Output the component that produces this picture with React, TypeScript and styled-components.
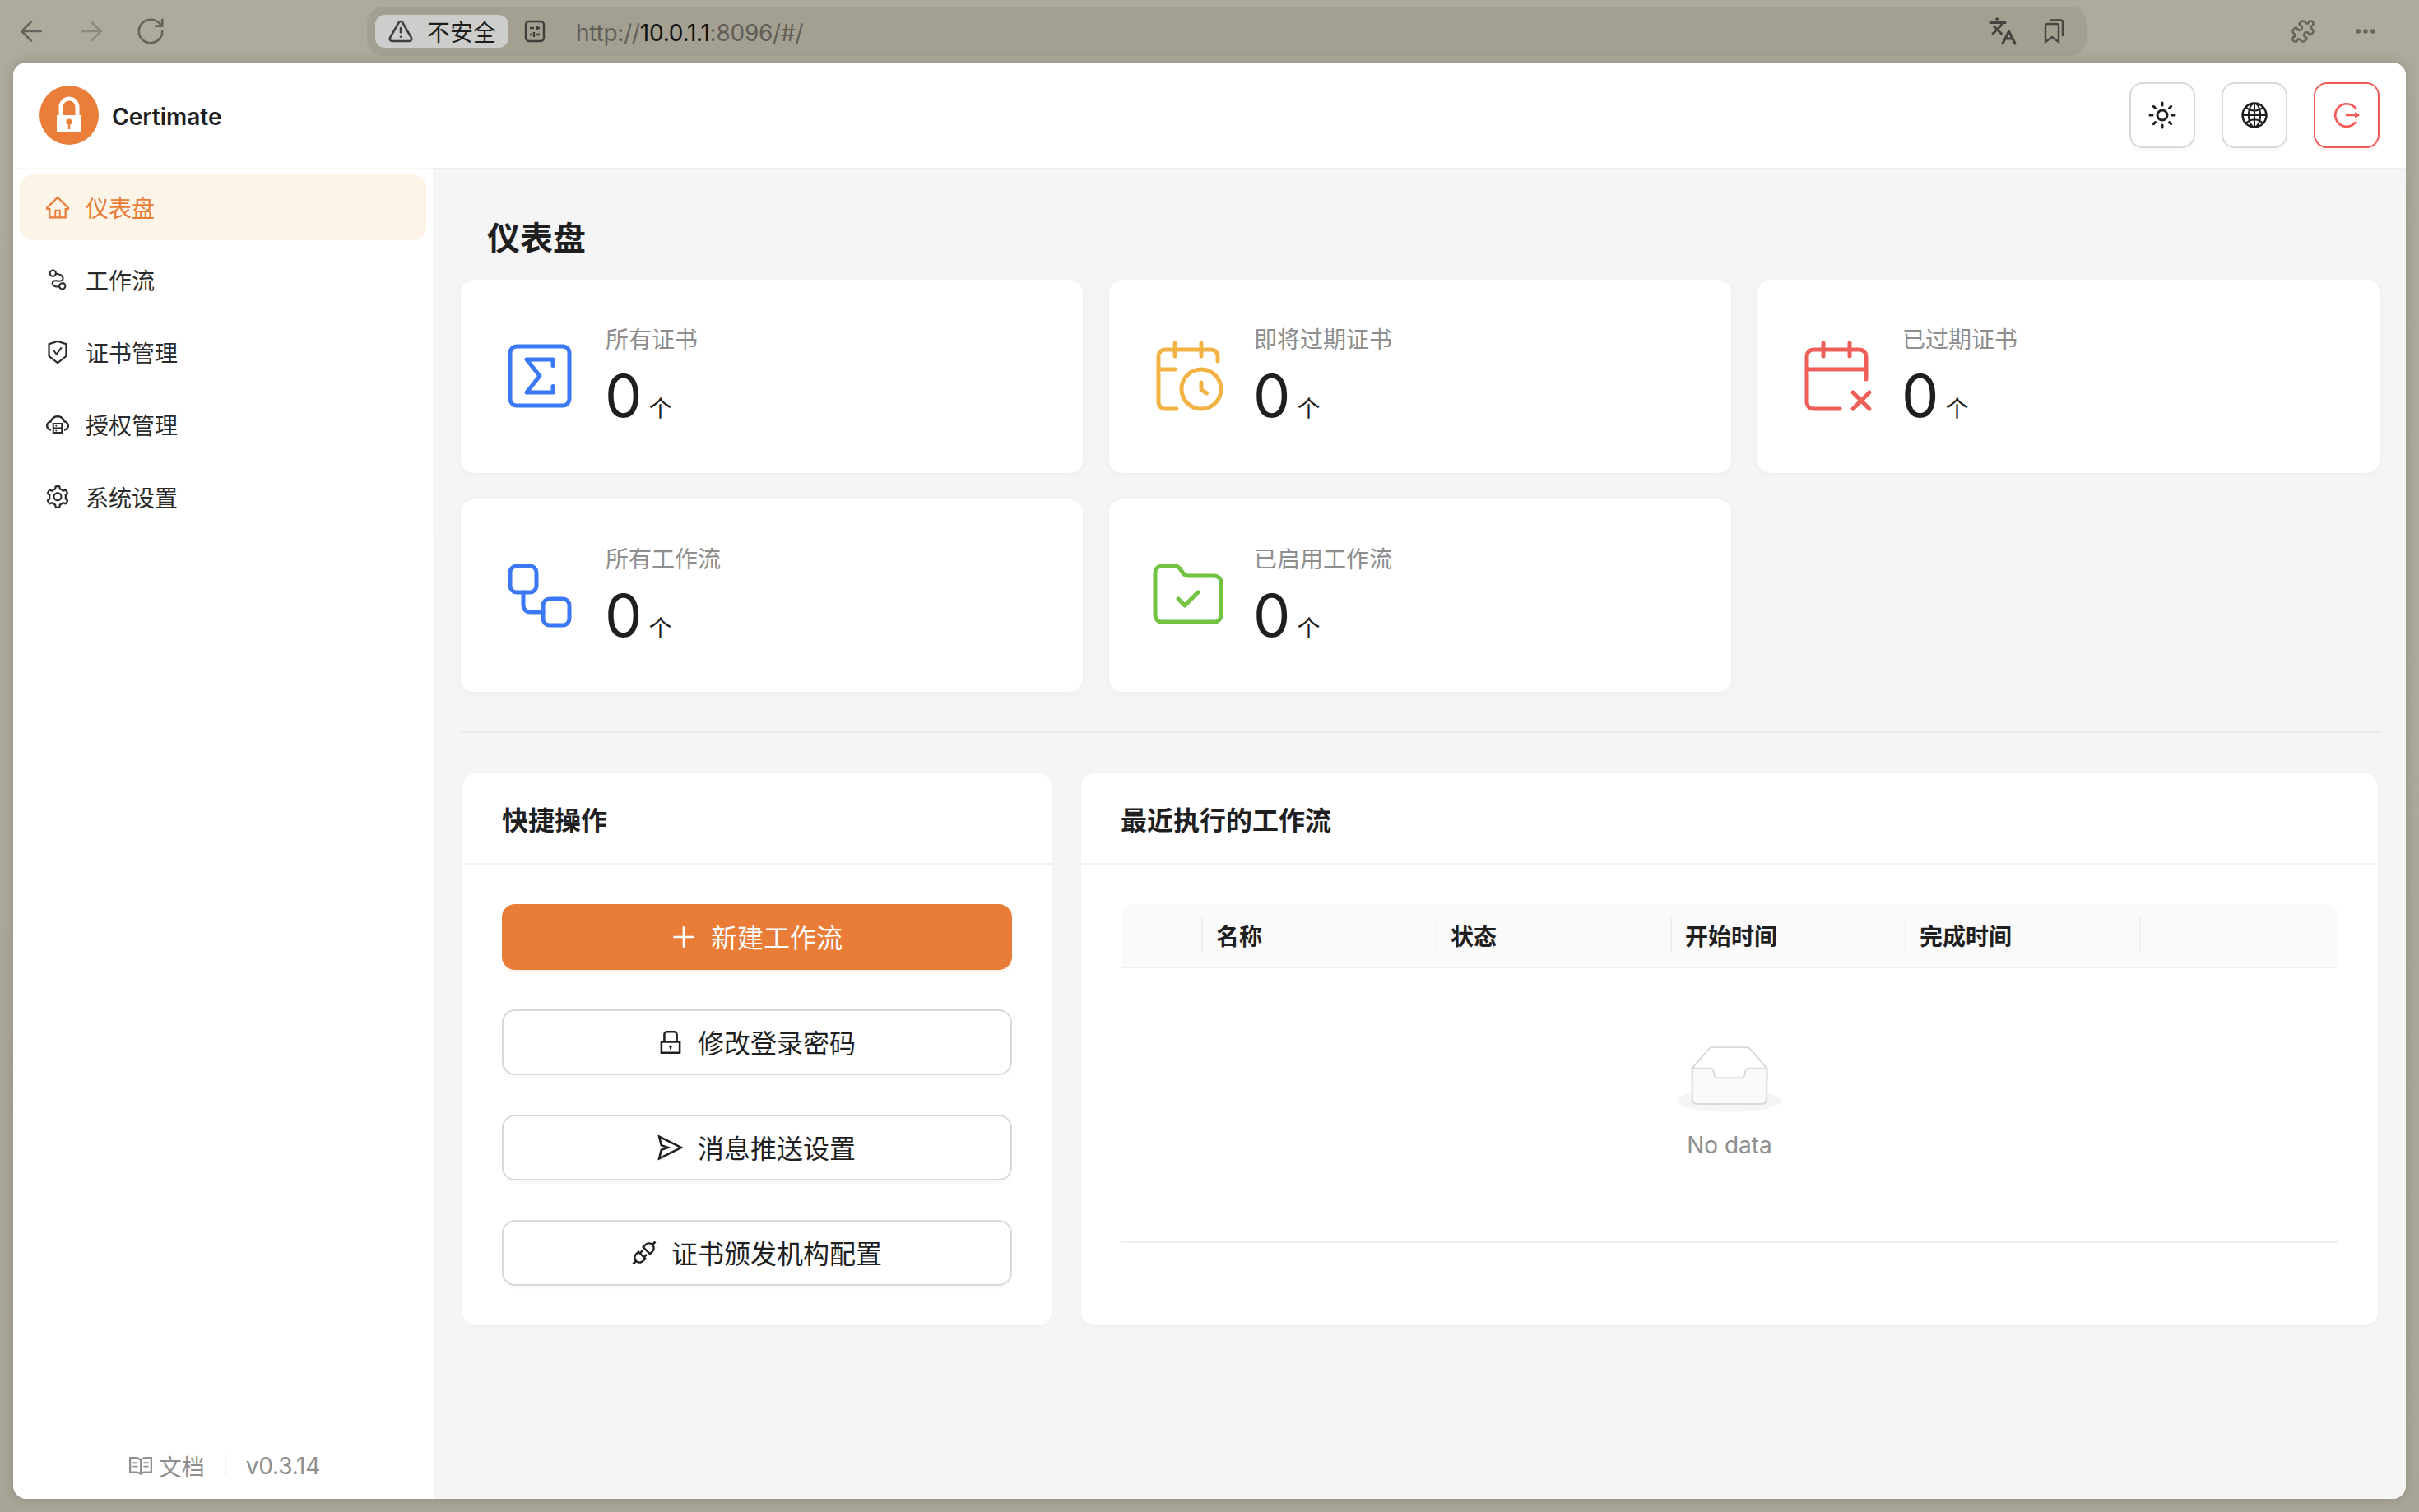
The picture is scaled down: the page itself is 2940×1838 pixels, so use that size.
import React from "react";
import styled, { createGlobalStyle } from "styled-components";
import {
  ArrowLeft,
  ArrowRight,
  CalendarClock,
  CalendarX2,
  Ellipsis,
  FolderCheck,
  Languages,
  Puzzle,
  RotateCw,
  SquareSigma,
  Sun,
  TriangleAlert,
  Workflow,
} from "lucide-react";
import {
  AiOutlineApi,
  AiOutlineCloudServer,
  AiOutlineGlobal,
  AiOutlineHome,
  AiOutlineLock,
  AiOutlineLogout,
  AiOutlineNodeIndex,
  AiOutlinePlus,
  AiOutlineRead,
  AiOutlineSafetyCertificate,
  AiOutlineSend,
  AiOutlineSetting,
} from "react-icons/ai";

const FONT = `"Inter", "Noto Sans CJK SC", "Noto Sans", sans-serif`;
const ORANGE = "#e97d38";
const TEXT = "#1f1f1f";
const MUTED = "#8e8e8e";

const Global = createGlobalStyle`
  html, body { margin: 0; padding: 0; }
  body { font-family: ${FONT}; color: ${TEXT}; background: #aca99a; }
  * { box-sizing: border-box; }
`;

const Page = styled.div`
  width: 2940px;
  height: 1838px;
  display: flex;
  flex-direction: column;
  background: linear-gradient(#aeab9c, #a9a697);
  overflow: hidden;
`;

/* Browser chrome */
const Chrome = styled.div`
  height: 76px;
  flex: none;
  display: flex;
  align-items: flex-start;
  padding: 8px 0 0 18px;
`;
const NavIcons = styled.div`
  width: 428px;
  height: 60px;
  display: flex;
  align-items: center;
  gap: 33px;
`;
const NavIcon = styled.span<{ $color: string }>`
  display: inline-flex;
  color: ${(p) => p.$color};
`;
const AddressBar = styled.div`
  width: 2090px;
  height: 60px;
  border-radius: 20px;
  background: #a3a092;
  display: flex;
  align-items: center;
  padding: 0 10px;
`;
const SecurityChip = styled.div`
  width: 162px;
  height: 40px;
  border-radius: 12px;
  background: #cdcdcb;
  display: flex;
  align-items: center;
  gap: 16px;
  padding-left: 15px;
  font-size: 28px;
  color: #1d1d1d;
`;
const TuneIcon = styled.svg`
  width: 28px;
  height: 28px;
  margin-left: 18px;
  color: #3f3e3a;
`;
const Url = styled.div`
  margin-left: 36px;
  padding-top: 3px;
  font-size: 28px;
  letter-spacing: -0.25px;
  color: #5f5e57;
  flex: 1;
`;
const UrlHost = styled.span`
  color: #111;
`;
const BarActions = styled.div`
  display: flex;
  align-items: center;
  gap: 30px;
  padding-right: 14px;
  color: #45443f;
`;
const ChromeEnd = styled.div`
  height: 60px;
  display: flex;
  align-items: center;
  gap: 46px;
  margin-left: 248px;
  color: #66655d;
`;

/* Window */
const Window = styled.div`
  flex: 1;
  margin: 0 16px 16px;
  border-radius: 16px;
  background: #fff;
  overflow: hidden;
  display: flex;
  flex-direction: column;
  box-shadow: 0 0 14px rgba(60, 55, 40, 0.22);
`;
const TopBar = styled.header`
  position: relative;
  z-index: 1;
  height: 128px;
  flex: none;
  display: flex;
  align-items: center;
  justify-content: space-between;
  padding: 0 32px;
  background: #fff;
  box-shadow: 0 1px 3px rgba(0, 0, 0, 0.05);
`;
const Brand = styled.div`
  display: flex;
  align-items: center;
  gap: 16px;
  font-size: 28px;
  font-weight: 600;
`;
const BrandName = styled.span`
  padding-top: 3px;
`;
const TopActions = styled.div`
  display: flex;
  gap: 32px;
`;
const IconButton = styled.button<{ $danger?: boolean }>`
  width: 80px;
  height: 80px;
  padding: 0;
  border-radius: 16px;
  background: #fff;
  display: flex;
  align-items: center;
  justify-content: center;
  border: 2px solid ${(p) => (p.$danger ? "#ef5a57" : "#d9d9d9")};
  color: ${(p) => (p.$danger ? "#ef5a57" : TEXT)};
  box-shadow: 0 4px 0 ${(p) => (p.$danger ? "rgba(255,38,5,0.06)" : "rgba(0,0,0,0.02)")};
`;
const Body = styled.div`
  flex: 1;
  min-height: 0;
  display: flex;
`;

/* Sidebar */
const Sidebar = styled.aside`
  width: 512px;
  flex: none;
  display: flex;
  flex-direction: column;
  justify-content: space-between;
`;
const Menu = styled.nav`
  height: 448px;
  padding: 8px 8px 0;
  border-right: 2px solid #f5f5f5;
  display: flex;
  flex-direction: column;
  gap: 8px;
`;
const MenuItem = styled.div<{ $active?: boolean }>`
  height: 80px;
  border-radius: 16px;
  display: flex;
  align-items: center;
  gap: 18px;
  padding-left: 30px;
  font-size: 28px;
  background: ${(p) => (p.$active ? "#fdf4e8" : "transparent")};
  color: ${(p) => (p.$active ? ORANGE : "#2a2a2a")};
`;
const SideFooter = styled.div`
  display: flex;
  align-items: center;
  justify-content: center;
  height: 44px;
  margin-bottom: 18px;
  font-size: 28px;
  color: ${MUTED};
`;
const DocLink = styled.span`
  display: inline-flex;
  align-items: center;
  gap: 6px;
`;
const FooterDivider = styled.span`
  width: 2px;
  height: 26px;
  background: #f0f0f0;
  margin: 0 24px;
`;
const Version = styled.span`
  letter-spacing: -0.2px;
`;

/* Main */
const Main = styled.main`
  flex: 1;
  min-width: 0;
  background: #f5f5f5;
  padding: 58px 32px 0;
`;
const Title = styled.h1`
  margin: 0 0 22px 32px;
  font-size: 40px;
  line-height: 56px;
  font-weight: 600;
`;
const StatGrid = styled.div`
  display: grid;
  grid-template-columns: repeat(3, 1fr);
  grid-auto-rows: 234.5px;
  gap: 32px;
`;
const StatCard = styled.div`
  background: #fff;
  border-radius: 16px;
  box-shadow: 0 2px 8px rgba(0, 0, 0, 0.04);
  display: flex;
  align-items: center;
  gap: 32px;
  padding: 0 48px;
`;
const StatIcon = styled.span<{ $color: string }>`
  display: inline-flex;
  color: ${(p) => p.$color};
`;
const StatText = styled.div`
  display: flex;
  flex-direction: column;
  padding-bottom: 2px;
`;
const StatLabel = styled.div`
  font-size: 28px;
  line-height: 44px;
  color: ${MUTED};
`;
const StatValue = styled.div`
  display: flex;
  align-items: baseline;
  gap: 8px;
  margin: 6px 0 0 -1px;
  height: 80px;
  line-height: 80px;
`;
const StatNumber = styled.span`
  font-size: 72px;
  font-weight: 400;
`;
const StatUnit = styled.span`
  font-size: 28px;
`;
const Divider = styled.div`
  height: 2px;
  background: #e9e9e9;
  margin: 48px 0 49px;
`;
const Panels = styled.div`
  display: flex;
  gap: 36px;
  padding: 0 2px;
`;
const Panel = styled.section<{ $wide?: boolean }>`
  background: #fff;
  border-radius: 16px;
  height: 671px;
  box-shadow: 0 1px 4px rgba(0, 0, 0, 0.03);
  ${(p) => (p.$wide ? "flex: 1; min-width: 0;" : "width: 716px; flex: none;")}
`;
const PanelHead = styled.div`
  height: 111px;
  padding: 0 48px;
  display: flex;
  align-items: center;
  border-bottom: 2px solid #f0f0f0;
  font-size: 32px;
  font-weight: 600;
`;
const PanelBody = styled.div`
  padding: 48px;
`;
const ActionList = styled.div`
  display: flex;
  flex-direction: column;
  gap: 48px;
`;
const ActionButton = styled.button<{ $primary?: boolean }>`
  height: 80px;
  border-radius: 16px;
  font-family: inherit;
  font-size: 32px;
  display: flex;
  align-items: center;
  justify-content: center;
  gap: 15px;
  padding: 0 3px 0 0;
  border: 2px solid ${(p) => (p.$primary ? ORANGE : "#d9d9d9")};
  background: ${(p) => (p.$primary ? ORANGE : "#fff")};
  color: ${(p) => (p.$primary ? "#fff" : TEXT)};
  box-shadow: 0 4px 0 ${(p) => (p.$primary ? "rgba(255,170,100,0.12)" : "rgba(0,0,0,0.02)")};
`;
const ActionLabel = styled.span`
  padding-bottom: 3px;
`;

/* Table */
const TableHead = styled.div`
  display: grid;
  grid-template-columns: 100px repeat(4, 285px) 1fr;
  height: 78px;
  background: #fafafa;
  border-radius: 16px 16px 0 0;
  border-bottom: 2px solid #f0f0f0;
`;
const HeadCell = styled.div<{ $last?: boolean }>`
  position: relative;
  display: flex;
  align-items: center;
  padding-left: 16px;
  font-size: 28px;
  font-weight: 600;
  &::after {
    content: "";
    display: ${(p) => (p.$last ? "none" : "block")};
    position: absolute;
    right: 0;
    top: 16px;
    width: 2px;
    height: 44px;
    background: #f0f0f0;
  }
`;
const EmptyRow = styled.div`
  height: 334px;
  padding-top: 94px;
  border-bottom: 2px solid #f0f0f0;
  display: flex;
  flex-direction: column;
  align-items: center;
`;
const EmptyArt = styled.svg`
  width: 126px;
  height: 81px;
`;
const EmptyText = styled.div`
  margin-top: 18px;
  font-size: 28px;
  line-height: 44px;
  color: ${MUTED};
`;

const LogoMark = () => (
  <svg width="72" height="72" viewBox="0 0 72 72" aria-label="Certimate logo">
    <circle cx="36" cy="36" r="36" fill="#ea7d38" />
    <path d="M26 38V26a10 10 0 0 1 20 0v12" fill="none" stroke="#fff" strokeWidth="5" />
    <rect x="21" y="36" width="30" height="21" fill="#fff" />
    <circle cx="36" cy="44" r="3.6" fill="#ea7d38" />
    <rect x="34.8" y="44" width="2.4" height="9" fill="#ea7d38" />
  </svg>
);

const BookmarksIcon = () => (
  <svg width="30" height="30" viewBox="0 0 30 30" fill="none" stroke="currentColor" strokeWidth="2.4">
    <path d="M4 28V8.5A2.5 2.5 0 0 1 6.500 6h11A2.500 2.500 0 0 1 20 8.500V28l-8-6z" />
    <path d="M9 1.500h13.500A2.500 2.500 0 0 1 25 4v17" />
  </svg>
);

const stats = [
  { label: "所有证书", color: "#3b78f6", Icon: SquareSigma },
  { label: "即将过期证书", color: "#f2b344", Icon: CalendarClock },
  { label: "已过期证书", color: "#ef5f5a", Icon: CalendarX2 },
  { label: "所有工作流", color: "#3b78f6", Icon: Workflow },
  { label: "已启用工作流", color: "#71c340", Icon: FolderCheck },
];

const menu = [
  { label: "仪表盘", Icon: AiOutlineHome, active: true },
  { label: "工作流", Icon: AiOutlineNodeIndex },
  { label: "证书管理", Icon: AiOutlineSafetyCertificate },
  { label: "授权管理", Icon: AiOutlineCloudServer },
  { label: "系统设置", Icon: AiOutlineSetting },
];

const actions = [
  { label: "修改登录密码", Icon: AiOutlineLock },
  { label: "消息推送设置", Icon: AiOutlineSend },
  { label: "证书颁发机构配置", Icon: AiOutlineApi },
];

const columns = ["", "名称", "状态", "开始时间", "完成时间", ""];

export default function App() {
  return (
    <Page>
      <Global />
      <Chrome>
        <NavIcons>
          <NavIcon $color="#66655d"><ArrowLeft size={40} strokeWidth={1.6} /></NavIcon>
          <NavIcon $color="#8d8b7f"><ArrowRight size={40} strokeWidth={1.6} /></NavIcon>
          <NavIcon $color="#66655d"><RotateCw size={38} strokeWidth={1.7} /></NavIcon>
        </NavIcons>
        <AddressBar>
          <SecurityChip>
            <TriangleAlert size={32} strokeWidth={1.9} color="#3f3f3f" />
            <span>不安全</span>
          </SecurityChip>
          <TuneIcon viewBox="0 0 28 28" fill="none" stroke="currentColor" strokeWidth="2.4">
            <rect x="3" y="2" width="22" height="24" rx="4" />
            <path d="M8 10h5M17 7v6M15 10h5M8 18h3M13 15v6M15 18h5" />
          </TuneIcon>
          <Url>
            http://<UrlHost>10.0.1.1</UrlHost>:8096/#/
          </Url>
          <BarActions>
            <Languages size={36} strokeWidth={2} />
            <BookmarksIcon />
          </BarActions>
        </AddressBar>
        <ChromeEnd>
          <Puzzle size={30} strokeWidth={2} />
          <Ellipsis size={30} strokeWidth={2.4} />
        </ChromeEnd>
      </Chrome>
      <Window>
        <TopBar>
          <Brand>
            <LogoMark />
            <BrandName>Certimate</BrandName>
          </Brand>
          <TopActions>
            <IconButton><Sun size={36} strokeWidth={2} /></IconButton>
            <IconButton><AiOutlineGlobal size={36} /></IconButton>
            <IconButton $danger><AiOutlineLogout size={36} /></IconButton>
          </TopActions>
        </TopBar>
        <Body>
          <Sidebar>
            <Menu>
              {menu.map(({ label, Icon, active }) => (
                <MenuItem key={label} $active={active}>
                  <Icon size={32} />
                  <span>{label}</span>
                </MenuItem>
              ))}
            </Menu>
            <SideFooter>
              <DocLink>
                <AiOutlineRead size={32} />
                <span>文档</span>
              </DocLink>
              <FooterDivider />
              <Version>v0.3.14</Version>
            </SideFooter>
          </Sidebar>
          <Main>
            <Title>仪表盘</Title>
            <StatGrid>
              {stats.map(({ label, color, Icon }) => (
                <StatCard key={label}>
                  <StatIcon $color={color}><Icon size={96} strokeWidth={1.25} /></StatIcon>
                  <StatText>
                    <StatLabel>{label}</StatLabel>
                    <StatValue>
                      <StatNumber>0</StatNumber>
                      <StatUnit>个</StatUnit>
                    </StatValue>
                  </StatText>
                </StatCard>
              ))}
            </StatGrid>
            <Divider />
            <Panels>
              <Panel>
                <PanelHead>快捷操作</PanelHead>
                <PanelBody>
                  <ActionList>
                    <ActionButton $primary>
                      <AiOutlinePlus size={36} />
                      <ActionLabel>新建工作流</ActionLabel>
                    </ActionButton>
                    {actions.map(({ label, Icon }) => (
                      <ActionButton key={label}>
                        <Icon size={36} />
                        <ActionLabel>{label}</ActionLabel>
                      </ActionButton>
                    ))}
                  </ActionList>
                </PanelBody>
              </Panel>
              <Panel $wide>
                <PanelHead>最近执行的工作流</PanelHead>
                <PanelBody>
                  <TableHead>
                    {columns.map((c, i) => (
                      <HeadCell key={i} $last={i === columns.length - 1}>{c}</HeadCell>
                    ))}
                  </TableHead>
                  <EmptyRow>
                    <EmptyArt viewBox="0 0 64 41">
                      <g transform="translate(0 1)" fill="none" fillRule="evenodd">
                        <ellipse fill="#f5f5f5" cx="32" cy="33" rx="32" ry="7" />
                        <g fillRule="nonzero" stroke="#d9d9d9">
                          <path d="M55 12.76L44.854 1.258C44.367.474 43.656 0 42.907 0H21.093c-.749 0-1.46.474-1.947 1.257L9 12.761V22h46v-9.24z" />
                          <path
                            d="M41.613 15.931c0-1.605.994-2.93 2.227-2.931H55v18.137C55 33.26 53.68 35 52.05 35h-40.1C10.32 35 9 33.259 9 31.137V13h11.16c1.233 0 2.227 1.323 2.227 2.928v.022c0 1.605 1.005 2.901 2.237 2.901h14.752c1.232 0 2.237-1.308 2.237-2.913v-.007z"
                            fill="#fafafa"
                          />
                        </g>
                      </g>
                    </EmptyArt>
                    <EmptyText>No data</EmptyText>
                  </EmptyRow>
                </PanelBody>
              </Panel>
            </Panels>
          </Main>
        </Body>
      </Window>
    </Page>
  );
}
